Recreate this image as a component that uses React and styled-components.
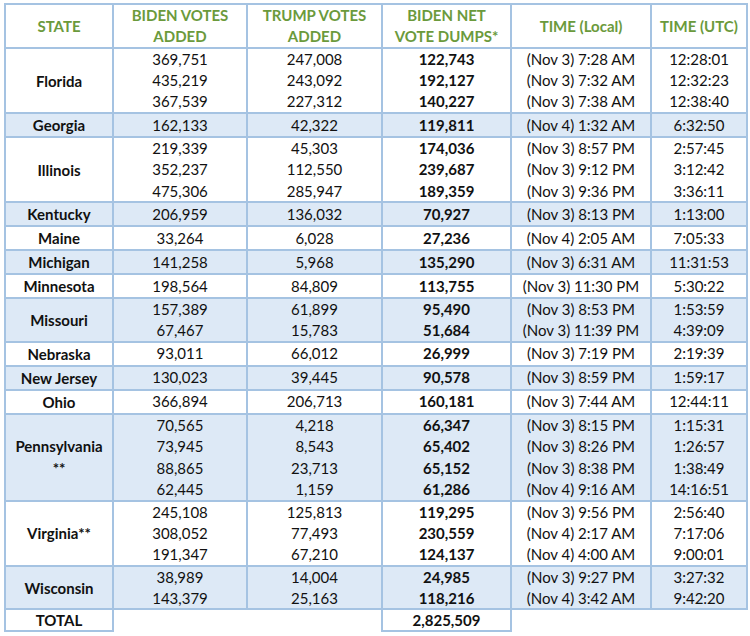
import styled, { createGlobalStyle } from "styled-components";

const GREEN = "#6b9a3c";
const LINE = "#a5c3e2";
const SHADE = "#dde9f6";

const GlobalStyle = createGlobalStyle`
  body {
    margin: 0;
    background: #fff;
    font-family: Lato, "Open Sans", sans-serif;
    color: #111;
  }
`;

const Page = styled.div`
  padding: 3px 4px 0 4px;
`;

const Table = styled.table`
  border-collapse: collapse;
  table-layout: fixed;
  width: 742px;
  font-size: 15px;
`;

const HeadCell = styled.th`
  height: 41px;
  padding: 0 2px;
  border: 2px solid ${LINE};
  color: ${GREEN};
  font-weight: 700;
  font-size: 15px;
  line-height: 21px;
  text-align: center;
  vertical-align: middle;
`;

const Row = styled.tr`
  height: ${(p) => (p.$tall ? "22px" : "21.74px")};
  background: ${(p) => (p.$shade ? SHADE : "#fff")};
`;

const StateCell = styled.td`
  padding: 0 2px;
  border: 2px solid ${LINE};
  font-weight: 700;
  text-align: center;
  vertical-align: middle;
  line-height: 22px;
  background: ${(p) => (p.$shade ? SHADE : "#fff")};
`;

const Cell = styled.td`
  padding: 0;
  line-height: 19px;
  text-align: center;
  vertical-align: middle;
  font-weight: ${(p) => (p.$bold ? 700 : 400)};
  border-left: 2px solid ${LINE};
  border-right: 2px solid ${LINE};
  border-bottom: ${(p) => (p.$last ? `2px solid ${LINE}` : "none")};
`;

const BoxCell = styled.td`
  padding: 0;
  line-height: 19px;
  border: 2px solid ${LINE};
  font-weight: 700;
  text-align: center;
  vertical-align: middle;
  background: #fff;
`;

const EmptyCell = styled.td`
  border: none;
  background: #fff;
`;

const groups = [
  { state: "Florida", rows: [
    ["369,751", "247,008", "122,743", "(Nov 3) 7:28 AM", "12:28:01"],
    ["435,219", "243,092", "192,127", "(Nov 3) 7:32 AM", "12:32:23"],
    ["367,539", "227,312", "140,227", "(Nov 3) 7:38 AM", "12:38:40"],
  ] },
  { state: "Georgia", rows: [
    ["162,133", "42,322", "119,811", "(Nov 4) 1:32 AM", "6:32:50"],
  ] },
  { state: "Illinois", rows: [
    ["219,339", "45,303", "174,036", "(Nov 3) 8:57 PM", "2:57:45"],
    ["352,237", "112,550", "239,687", "(Nov 3) 9:12 PM", "3:12:42"],
    ["475,306", "285,947", "189,359", "(Nov 3) 9:36 PM", "3:36:11"],
  ] },
  { state: "Kentucky", rows: [
    ["206,959", "136,032", "70,927", "(Nov 3) 8:13 PM", "1:13:00"],
  ] },
  { state: "Maine", rows: [
    ["33,264", "6,028", "27,236", "(Nov 4) 2:05 AM", "7:05:33"],
  ] },
  { state: "Michigan", rows: [
    ["141,258", "5,968", "135,290", "(Nov 3) 6:31 AM", "11:31:53"],
  ] },
  { state: "Minnesota", rows: [
    ["198,564", "84,809", "113,755", "(Nov 3) 11:30 PM", "5:30:22"],
  ] },
  { state: "Missouri", rows: [
    ["157,389", "61,899", "95,490", "(Nov 3) 8:53 PM", "1:53:59"],
    ["67,467", "15,783", "51,684", "(Nov 3) 11:39 PM", "4:39:09"],
  ] },
  { state: "Nebraska", rows: [
    ["93,011", "66,012", "26,999", "(Nov 3) 7:19 PM", "2:19:39"],
  ] },
  { state: "New Jersey", rows: [
    ["130,023", "39,445", "90,578", "(Nov 3) 8:59 PM", "1:59:17"],
  ] },
  { state: "Ohio", rows: [
    ["366,894", "206,713", "160,181", "(Nov 3) 7:44 AM", "12:44:11"],
  ] },
  { state: ["Pennsylvania", "**"], rows: [
    ["70,565", "4,218", "66,347", "(Nov 3) 8:15 PM", "1:15:31"],
    ["73,945", "8,543", "65,402", "(Nov 3) 8:26 PM", "1:26:57"],
    ["88,865", "23,713", "65,152", "(Nov 3) 8:38 PM", "1:38:49"],
    ["62,445", "1,159", "61,286", "(Nov 4) 9:16 AM", "14:16:51"],
  ] },
  { state: "Virginia**", rows: [
    ["245,108", "125,813", "119,295", "(Nov 3) 9:56 PM", "2:56:40"],
    ["308,052", "77,493", "230,559", "(Nov 4) 2:17 AM", "7:17:06"],
    ["191,347", "67,210", "124,137", "(Nov 4) 4:00 AM", "9:00:01"],
  ] },
  { state: "Wisconsin", rows: [
    ["38,989", "14,004", "24,985", "(Nov 3) 9:27 PM", "3:27:32"],
    ["143,379", "25,163", "118,216", "(Nov 4) 3:42 AM", "9:42:20"],
  ] },
];

const StateName = ({ state }) =>
  Array.isArray(state)
    ? state.map((s, i) => <div key={i}>{s}</div>)
    : state;

const Group = ({ group, shade }) =>
  group.rows.map((r, i) => {
    const last = i === group.rows.length - 1;
    return (
      <Row key={i} $shade={shade}>
        {i === 0 && (
          <StateCell rowSpan={group.rows.length} $shade={shade}>
            <StateName state={group.state} />
          </StateCell>
        )}
        <Cell $last={last}>{r[0]}</Cell>
        <Cell $last={last}>{r[1]}</Cell>
        <Cell $last={last} $bold>{r[2]}</Cell>
        <Cell $last={last}>{r[3]}</Cell>
        <Cell $last={last}>{r[4]}</Cell>
      </Row>
    );
  });

export default function App() {
  return (
    <>
      <GlobalStyle />
      <Page>
        <Table>
          <colgroup>
            <col style={{ width: 108 }} />
            <col style={{ width: 134 }} />
            <col style={{ width: 135 }} />
            <col style={{ width: 129 }} />
            <col style={{ width: 140 }} />
            <col style={{ width: 96 }} />
          </colgroup>
          <thead>
            <tr>
              <HeadCell>STATE</HeadCell>
              <HeadCell>BIDEN VOTES<br />ADDED</HeadCell>
              <HeadCell>TRUMP VOTES<br />ADDED</HeadCell>
              <HeadCell>BIDEN NET<br />VOTE DUMPS*</HeadCell>
              <HeadCell>TIME (Local)</HeadCell>
              <HeadCell>TIME (UTC)</HeadCell>
            </tr>
          </thead>
          <tbody>
            {groups.map((g, i) => (
              <Group key={i} group={g} shade={i % 2 === 1} />
            ))}
            <Row $tall>
              <BoxCell>TOTAL</BoxCell>
              <EmptyCell />
              <EmptyCell />
              <BoxCell>2,825,509</BoxCell>
              <EmptyCell />
              <EmptyCell />
            </Row>
          </tbody>
        </Table>
      </Page>
    </>
  );
}
